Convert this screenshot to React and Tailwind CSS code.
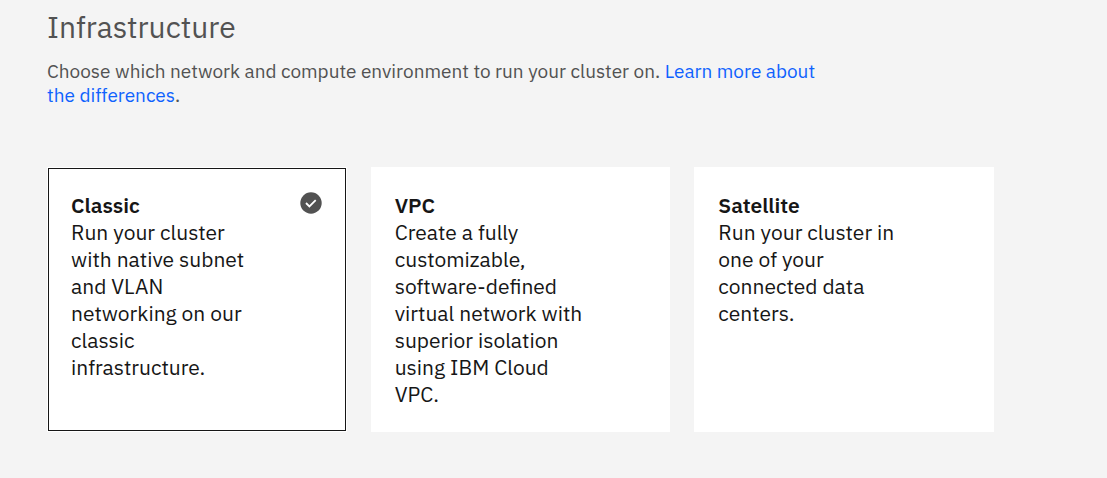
import React from "react";

const options = [
  {
    id: "classic",
    title: "Classic",
    text: "Run your cluster with native subnet and VLAN networking on our classic infrastructure.",
  },
  {
    id: "vpc",
    title: "VPC",
    text: "Create a fully customizable, software-defined virtual network with superior isolation using IBM Cloud VPC.",
  },
  {
    id: "satellite",
    title: "Satellite",
    text: "Run your cluster in one of your connected data centers.",
  },
];

function Check() {
  return (
    <svg viewBox="0 0 22 22" className="hidden size-[22px] group-has-checked:block" aria-hidden="true">
      <circle cx="11" cy="11" r="10.7" fill="#525252" />
      <path d="M6 11l3.4 3.4 6.3-6.3" fill="none" stroke="#fff" strokeWidth="1.8" />
    </svg>
  );
}

function Tile({ option, defaultChecked }) {
  return (
    <label className="group relative flex cursor-pointer justify-between bg-white pt-[25px] pr-[25px] pb-6 pl-6 outline-1 -outline-offset-2 outline-transparent has-checked:outline-[#161616]">
      <input
        type="radio"
        name="infrastructure"
        value={option.id}
        defaultChecked={defaultChecked}
        className="absolute inset-0 cursor-pointer appearance-none outline-none"
      />
      <span className="block w-48 text-[21px] leading-[27px] text-[#161616]">
        <span className="block font-semibold">{option.title}</span>
        <span className="block">{option.text}</span>
      </span>
      <Check />
    </label>
  );
}

export default function App() {
  return (
    <main className="min-h-screen bg-[#f4f4f4] px-[47px] pt-[7px] pb-[46px] font-['IBM_Plex_Sans','Noto_Sans',sans-serif]">
      <h1 id="infrastructure-heading" className="text-[30px] leading-10 text-[#525252]">
        Infrastructure
      </h1>
      <p className="mt-3 max-w-[780px] text-[19px] leading-6 text-[#525252]">
        Choose which network and compute environment to run your cluster on.{" "}
        <a href="#differences" className="text-[#0f62fe]">
          Learn more about the differences
        </a>
        .
      </p>
      <div
        role="radiogroup"
        aria-labelledby="infrastructure-heading"
        className="mt-[60px] grid max-w-[947px] grid-cols-3 gap-6"
      >
        {options.map((option, index) => (
          <Tile key={option.id} option={option} defaultChecked={index === 0} />
        ))}
      </div>
    </main>
  );
}
